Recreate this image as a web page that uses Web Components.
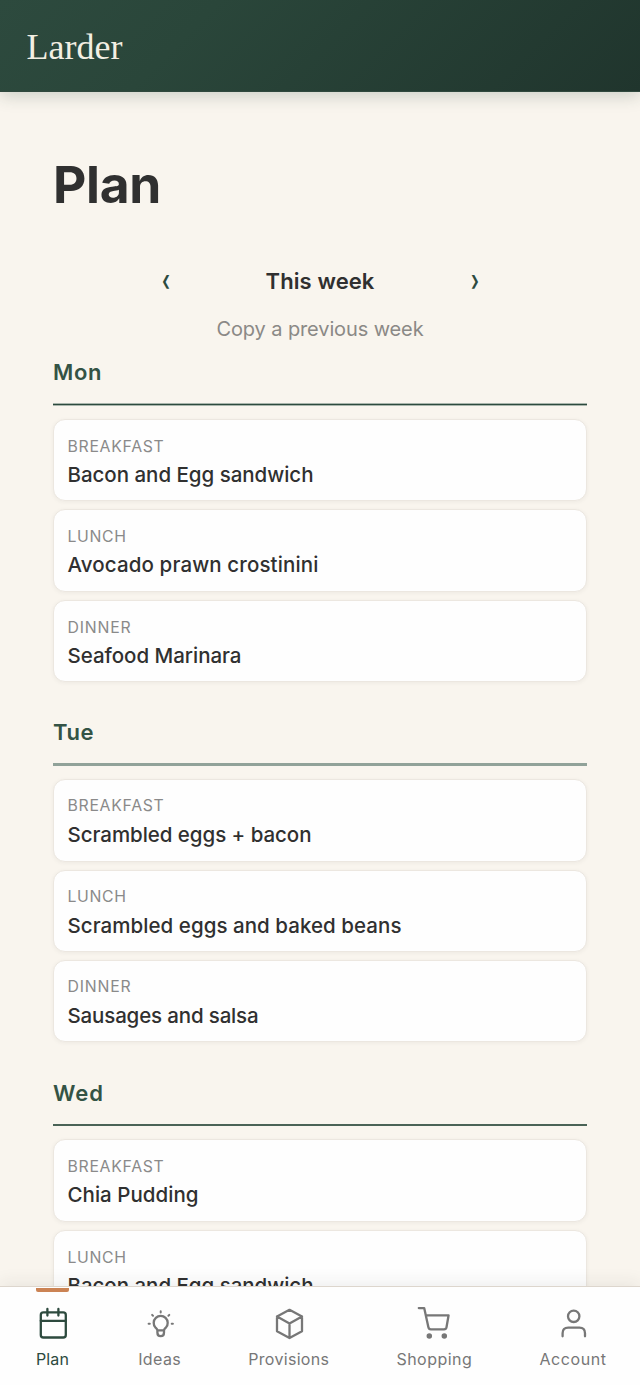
<!DOCTYPE html>
<html lang="en">
<head>
<meta charset="utf-8">
<title>Larder</title>
<style>
html,body{margin:0;height:100%;overflow:hidden;background:#f9f5ee}
body{font-family:Inter,"Open Sans",sans-serif;color:#303030}
</style>
</head>
<body>
<larder-app></larder-app>
<script>
const define=(name,html,setup)=>{
  const t=document.createElement('template');t.innerHTML=html;
  customElements.define(name,class extends HTMLElement{
    constructor(){super();this.attachShadow({mode:'open'}).append(t.content.cloneNode(true));}
    connectedCallback(){if(setup)setup(this,this.shadowRoot);}
  });
};

// Text whose tracking is set so that the line takes the given width.
define('fit-text','<style>:host{display:block;white-space:nowrap;width:max-content}span{display:inline-block}</style><span><slot></slot></span>',(el,root)=>{
  const s=root.querySelector('span'),w=+el.getAttribute('width'),n=el.textContent.length;
  s.style.letterSpacing='0px';
  s.style.letterSpacing=(w-s.getBoundingClientRect().width)/n+'px';
});

define('app-header',`<style>
:host{display:flex;box-sizing:border-box;height:92px;flex:none;padding:27px 26.5px 0;background:linear-gradient(135deg,#2d4a3e 0%,#2a463a 30%,#20352d 100%);border-bottom:1px solid #30483e;box-shadow:0 4px 16px rgba(32,53,45,.2);position:relative;z-index:1}
fit-text{font:400 36px/41px "Liberation Serif",serif;color:#f3efe3}
</style><fit-text width="98.5"><slot></slot></fit-text>`);

define('week-nav',`<style>
:host{display:flex;flex-direction:column;align-items:center;margin-top:45px}
.row{display:flex;justify-content:space-between;align-items:center;width:325px;height:44px}
.arrow{width:16px;text-align:center;font-weight:600;font-size:20px;line-height:28px;color:#2d4a3e;transform:translateY(-1px) scale(.95,1.5)}
.label{font-weight:600;font-size:22px;line-height:28px}
.copy{color:#8b8986;font-size:20px;line-height:28px;margin-top:12px}
</style><div class="row"><div class="arrow">‹</div><fit-text class="label" width="109">This week</fit-text><div class="arrow">›</div></div>
<fit-text class="copy" width="207">Copy a previous week</fit-text>`);

define('day-section',`<style>
:host{display:flex;flex-direction:column;height:360.3px;flex:none}
.name{font-weight:600;font-size:22px;line-height:30px;color:#345345}
.rule{height:var(--rule);background:var(--rule-fill);margin:var(--rule-gap) 0 var(--rule-after);flex:none}
.list{display:flex;flex-direction:column;gap:8px}
</style><fit-text class="name"></fit-text><div class="rule"></div><div class="list"><slot></slot></div>`,(el,root)=>{
  const n=root.querySelector('.name');n.textContent=el.getAttribute('name');n.setAttribute('width',el.getAttribute('width'));n.connectedCallback();
});

define('meal-card',`<style>
:host{display:block;box-sizing:border-box;height:82.3px;padding:var(--card-top,17px) 13.5px 0;background:#fefefe;border:1px solid #ece7e0;border-radius:12px;box-shadow:0 1px 4px rgba(45,45,45,.06)}
.kind{font-size:15.8px;line-height:20px;color:#8a8a8a}
.meal{font-size:20.5px;line-height:28px;font-weight:500;margin-top:var(--meal-gap,4px)}
</style><fit-text class="kind"></fit-text><fit-text class="meal"></fit-text>`,(el,root)=>{
  const widths={BREAKFAST:97,LUNCH:59,DINNER:64},k=root.querySelector('.kind'),m=root.querySelector('.meal'),kind=el.getAttribute('kind');
  k.textContent=kind;k.setAttribute('width',widths[kind]);k.connectedCallback();
  m.textContent=el.getAttribute('meal');m.setAttribute('width',el.getAttribute('width'));m.connectedCallback();
});

const icons={
Plan:'<rect x="5.8" y="7.3" width="25" height="25.2" rx="2.6"/><path d="M5.8 15.8h25M12.4 4v6.6M23.4 4v6.6"/>',
Ideas:'<path d="M15.4 25.6c0-1.5-.8-2-1.9-3a7 7 0 1 1 10.4 0c-1.1 1-1.9 1.5-1.9 3M15.4 25.4h6.6v2c0 5-6.6 5-6.6 0z"/><path stroke-width="2" d="M18.7 6.2v1.4M6.6 18.8h1.2M29.7 18.8h1.2M10.1 9.9l.9.9M27.3 9.9l-.9.9"/>',
Provisions:'<path d="M18.5 4.8 31 11.5v14.8L18.5 33 6 26.3V11.5zM6 11.5l12.5 7 12.5-7M18.5 18.5V33"/>',
Shopping:'<path d="M2.8 3.1h5.4l4.2 19.2q.4 2 2.4 2h13.3q2 0 2.4-2l2.1-12H9.8"/><circle cx="13.3" cy="31" r="1.6" fill="currentColor"/><circle cx="28.3" cy="31" r="1.6" fill="currentColor"/>',
Account:'<circle cx="18.7" cy="11.3" r="5.7"/><path d="M7.6 31.3v-3q0-5.6 5.6-5.6h11.2q5.6 0 5.6 5.6v3"/>'};

define('nav-item',`<style>
:host{display:flex;flex-direction:column;align-items:center;color:#777;position:relative;padding-top:18px}
:host([active]){color:#2d4a3e;margin-right:2px}
:host([active])::before{content:"";position:absolute;top:1px;left:0;width:100%;height:4px;background:#cb8354;border-radius:0 0 2px 2px}
svg{display:block;width:36px;height:36px;margin:0 -10px;fill:none;stroke:currentColor;stroke-width:2.3;stroke-linecap:round;stroke-linejoin:round}
fit-text{font-size:16px;line-height:22px;margin-top:7px}
</style><svg viewBox="0 0 36 36"></svg><fit-text></fit-text>`,(el,root)=>{
  const l=el.getAttribute('label'),t=root.querySelector('fit-text');
  root.querySelector('svg').innerHTML=icons[l];t.textContent=l;t.setAttribute('width',el.getAttribute('width'));t.connectedCallback();
});

define('tab-bar',`<style>
:host{position:absolute;left:0;right:0;bottom:0;height:99px;box-sizing:border-box;display:flex;justify-content:space-between;padding:0 33.5px 0 36px;background:#fefefe;border-top:1px solid #ddd6cd;box-shadow:0 -4px 16px rgba(45,45,45,.07);z-index:2}
</style><slot></slot>`);

define('larder-app',`<style>
:host{display:flex;flex-direction:column;height:1385px;overflow:hidden;position:relative}
main{display:flex;flex-direction:column;padding:62px 53px 0}
.title{font-weight:700;font-size:51.5px;line-height:60px}
.days{display:flex;flex-direction:column;margin-top:14px}
.mon{--rule:3px;--rule-fill:linear-gradient(#a9b5ac 1px,#2d4a3e 1px 2px,#a9b5ac 2px);--rule-gap:16px;--rule-after:13px}
.tue{--rule:3px;--rule-fill:#91a299;--rule-gap:15.7px;--rule-after:13.5px;--card-top:16px;--meal-gap:5px}
.wed{--rule:2px;--rule-fill:#4a6356;--rule-gap:16.4px;--rule-after:13.4px}
</style>
<app-header>Larder</app-header>
<main>
<fit-text class="title" width="108">Plan</fit-text>
<week-nav></week-nav>
<div class="days">
<day-section class="mon" name="Mon" width="49"><meal-card kind="BREAKFAST" meal="Bacon and Egg sandwich" width="246"></meal-card><meal-card kind="LUNCH" meal="Avocado prawn crostinini" width="251"></meal-card><meal-card kind="DINNER" meal="Seafood Marinara" width="174"></meal-card></day-section>
<day-section class="tue" name="Tue" width="41"><meal-card kind="BREAKFAST" meal="Scrambled eggs + bacon" width="244"></meal-card><meal-card kind="LUNCH" meal="Scrambled eggs and baked beans" width="334"></meal-card><meal-card kind="DINNER" meal="Sausages and salsa" width="191"></meal-card></day-section>
<day-section class="wed" name="Wed" width="51"><meal-card kind="BREAKFAST" meal="Chia Pudding" width="131"></meal-card><meal-card kind="LUNCH" meal="Bacon and Egg sandwich" width="246"></meal-card></day-section>
</div>
</main>
<tab-bar><nav-item active label="Plan" width="33"></nav-item><nav-item label="Ideas" width="43"></nav-item><nav-item label="Provisions" width="81"></nav-item><nav-item label="Shopping" width="76"></nav-item><nav-item label="Account" width="67"></nav-item></tab-bar>`);
</script>
</body>
</html>
